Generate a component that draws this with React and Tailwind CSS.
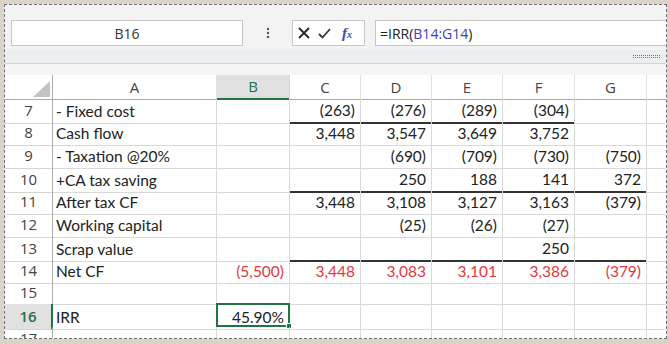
import React from 'react';

const cellFont = { fontFamily: 'Lato, "Open Sans", sans-serif' };

const rows = [
  { n: 7, a: '- Fixed cost', v: ['', '(263)', '(276)', '(289)', '(304)', ''], line: [2, 3, 4, 5] },
  { n: 8, a: 'Cash flow', v: ['', '3,448', '3,547', '3,649', '3,752', ''] },
  { n: 9, a: '- Taxation @20%', v: ['', '', '(690)', '(709)', '(730)', '(750)'] },
  { n: 10, a: '+CA tax saving', v: ['', '', '250', '188', '141', '372'], line: [2, 3, 4, 5, 6] },
  { n: 11, a: 'After tax CF', v: ['', '3,448', '3,108', '3,127', '3,163', '(379)'] },
  { n: 12, a: 'Working capital', v: ['', '', '(25)', '(26)', '(27)', ''] },
  { n: 13, a: 'Scrap value', v: ['', '', '', '', '250', ''], line: [2, 3, 4, 5, 6] },
  { n: 14, a: 'Net CF', v: ['(5,500)', '3,448', '3,083', '3,101', '3,386', '(379)'], red: true },
  { n: 15, a: '', v: ['', '', '', '', '', ''] },
  { n: 16, a: 'IRR', v: ['45.90%', '', '', '', '', ''], active: true },
  { n: 17, a: '', v: ['', '', '', '', '', ''] },
];

const cols = ['A', 'B', 'C', 'D', 'E', 'F', 'G'];

function HeaderRow() {
  return (
    <div className="grid grid-cols-[48px_164px_73px_71px_71px_71px_72px_72px_1fr] h-[22px] bg-white">
      <div className="relative border-r border-r-[#ababab] border-b border-b-[#ababab]">
        <svg className="absolute right-[2px] bottom-[2px]" width="17" height="16" viewBox="0 0 17 16">
          <polygon points="17,0 17,16 0,16" fill="#c3c3c3" />
        </svg>
      </div>
      {cols.map((c) => (
        <div
          key={c}
          className={
            c === 'B'
              ? 'flex items-center justify-center bg-[#e1e1e1] border-r border-[#d4d4d4] border-b-2 border-b-[#217346] text-[#217346] text-[15px]'
              : 'flex items-center justify-center border-r border-[#e1e1e1] border-b border-b-[#ababab] text-[#444] text-[15px]'
          }
          style={{ fontFamily: '"Open Sans", sans-serif' }}
        >
          {c}
        </div>
      ))}
      <div className="border-b border-b-[#ababab]" />
    </div>
  );
}

function DataRow({ row }) {
  const lines = row.line || [];
  return (
    <div className="grid grid-cols-[48px_164px_73px_71px_71px_71px_72px_72px_1fr] h-[23px] bg-white">
      <div
        className={
          row.active
            ? 'flex items-center justify-center bg-[#e1e1e1] border-r-2 border-r-[#217346] border-b border-b-[#d4d4d4] text-[#217346] text-[15px] font-semibold'
            : 'flex items-center justify-center border-r border-r-[#ababab] border-b border-b-[#d4d4d4] text-[#444] text-[15px]'
        }
        style={{ fontFamily: '"Open Sans", sans-serif' }}
      >
        {row.n}
      </div>
      <div
        className="flex items-center pl-[3px] pt-[2px] border-r border-b border-[#d9d9d9] text-[15.5px] text-[#222]"
        style={cellFont}
      >
        {row.a}
      </div>
      {row.v.map((val, i) => {
        const colIdx = i + 1;
        const dark = lines.includes(colIdx);
        return (
          <div
            key={i}
            className={
              'relative flex items-center justify-end pr-[5px] pt-[2px] border-r border-r-[#d9d9d9] text-[15.5px] ' +
              (dark ? 'border-b-2 border-b-[#333] ' : 'border-b border-b-[#d9d9d9] ') +
              (row.red ? 'text-[#e0393e]' : 'text-[#222]')
            }
            style={cellFont}
          >
            {val}
            {row.active && i === 0 && (
              <div className="absolute -left-[1px] -top-[1px] w-[74px] h-[24px] border-2 border-[#217346]">
                <div className="absolute -right-[4px] -bottom-[4px] w-[6px] h-[6px] bg-[#217346] border border-white" />
              </div>
            )}
          </div>
        );
      })}
      <div className="border-b border-[#d9d9d9]" />
    </div>
  );
}

export default function App() {
  return (
    <div className="w-[669px] h-[344px] bg-[#d9d4c7] pl-[4px] pt-[4px] overflow-hidden">
      <div className="w-[663px] h-[335px] border border-dashed border-[#6e6e6e] bg-[#f3f3f3] overflow-hidden">
        {/* formula bar */}
        <div className="h-[45px] flex items-start pt-[15px] pl-[6px]">
          <div
            className="w-[232px] h-[26px] bg-white border border-[#c6c6c6] flex items-center justify-center text-[14px] text-[#333]"
            style={{ fontFamily: '"Open Sans", sans-serif' }}
          >
            B16
          </div>
          <div className="w-[49px] h-[26px] flex items-center justify-center">
            <svg width="4" height="12" viewBox="0 0 4 12">
              <circle cx="2" cy="2" r="1.2" fill="#555" />
              <circle cx="2" cy="6" r="1.2" fill="#555" />
              <circle cx="2" cy="10" r="1.2" fill="#555" />
            </svg>
          </div>
          <div className="w-[73px] h-[26px] bg-white border border-[#c6c6c6] flex items-center pl-[5px] gap-[8px]">
            <svg width="12" height="12" viewBox="0 0 12 12">
              <path d="M1 1 L11 11 M11 1 L1 11" stroke="#222" strokeWidth="1.8" />
            </svg>
            <svg width="13" height="11" viewBox="0 0 13 11">
              <path d="M1 6 L4.5 9.5 L12 1" stroke="#333" strokeWidth="1.8" fill="none" />
            </svg>
            <span
              className="ml-[3px] italic font-bold text-[15px] text-[#3b4aa8] leading-none"
              style={{ fontFamily: '"Liberation Serif", serif' }}
            >
              f<span className="text-[10px]">x</span>
            </span>
          </div>
          <div
            className="ml-[10px] flex-1 h-[26px] bg-white border border-[#c6c6c6] border-r-0 flex items-center pl-[4px] text-[14px] text-[#222]"
            style={{ fontFamily: '"Open Sans", sans-serif' }}
          >
            =IRR(<span className="text-[#4040c0]">B14:G14</span>)
          </div>
        </div>
        <div className="h-[13px] bg-[#eceef0] flex items-center justify-end pr-[5px]">
          <svg width="28" height="4" viewBox="0 0 28 4">
            {Array.from({ length: 14 }).map((_, i) => (
              <g key={i}>
                <rect x={i * 2} y="0" width="1" height="1" fill="#777" />
                <rect x={i * 2} y="2" width="1" height="1" fill="#777" />
              </g>
            ))}
          </svg>
        </div>
        <div className="h-[12px] border-t border-[#d4d4d4] bg-[#f5f5f5]" />
        <HeaderRow />
        {rows.map((r) => (
          <DataRow key={r.n} row={r} />
        ))}
      </div>
    </div>
  );
}
